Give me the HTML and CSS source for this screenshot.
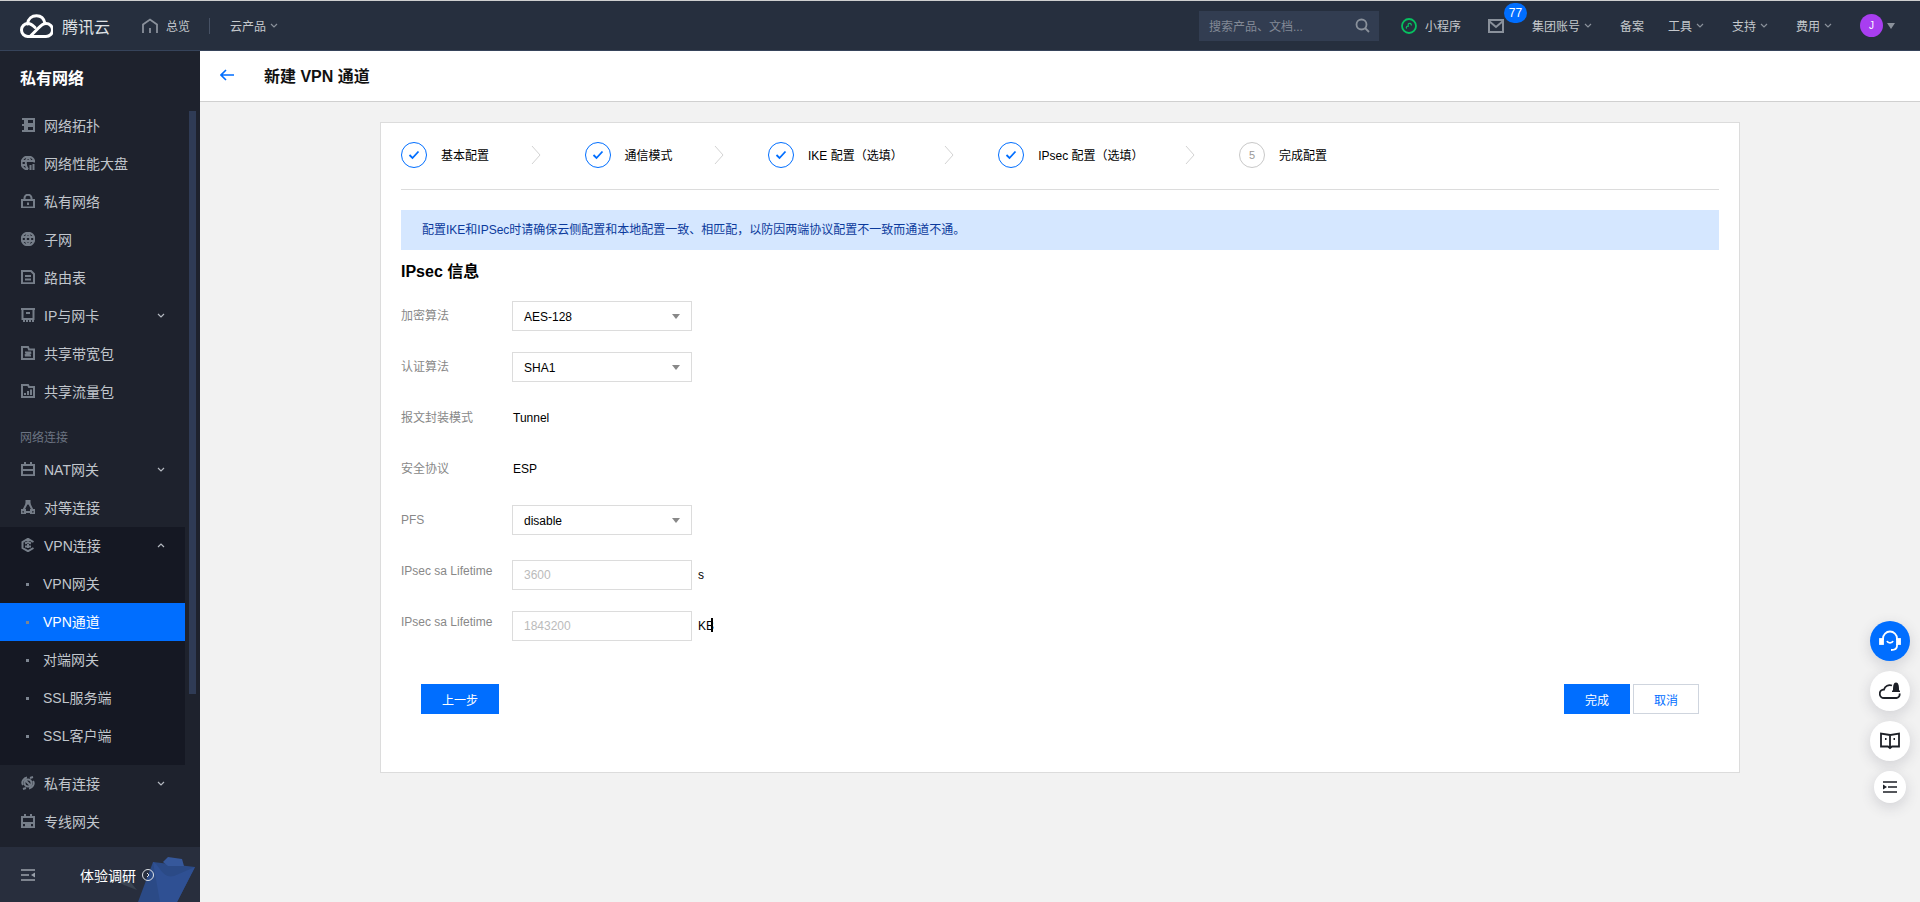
FILE: index.html
```html
<!DOCTYPE html>
<html lang="zh-CN">
<head>
  <meta charset="UTF-8" />
  <title>新建 VPN 通道</title>
  <link rel="stylesheet" href="styles.css">
</head>
<body>
<header class="topbar">
  <svg class="logo" viewBox="0 0 33 24" fill="none" stroke="#fff" stroke-width="3" stroke-linecap="round">
    <path d="M8 22.500H26A6.500 6.500 0 0 0 26 9.500C22 9.500 20 12.500 16.500 16L11 21.500"/>
    <path d="M8 22.500A6.500 6.500 0 1 1 8 9.500C11 9.500 13 11.500 15 13.500"/>
    <path d="M7.500 10C8 4.500 12 1.800 16.500 1.800C20.500 1.800 24 4.500 25 9.500"/>
  </svg>
  <span class="brand">腾讯云</span>
  <svg class="home-icon" viewBox="0 0 16 16" fill="none" stroke="#8a919b" stroke-width="1.800"><path d="M1 15V6.500L8 1.500L15 6.500V15"/><path d="M8 10V15"/></svg>
  <span class="nav-text">总览</span>
  <span class="nav-divider"></span>
  <span class="nav-text nav-products">云产品</span>
  <svg class="chev" viewBox="0 0 8 5" fill="none" stroke="#8a919b" stroke-width="1.200"><path d="M1 1L4 4L7 1"/></svg>

  <div class="search">
    <span>搜索产品、文档...</span>
    <svg width="15" height="15" viewBox="0 0 15 15" fill="none" stroke="#8a919b" stroke-width="1.800"><circle cx="6.500" cy="6.500" r="5"/><path d="M10 10L14 14"/></svg>
  </div>
  <svg class="mini-icon" viewBox="0 0 16 16" fill="none" stroke="#07c160" stroke-width="1.800"><circle cx="8" cy="8" r="7"/><path d="M5.800 10.500C4.500 9.500 6 7.800 7.200 8.200V6.500C7.200 4.800 11 5 10.200 7.500" stroke-width="1.200"/></svg>
  <span class="nav-text mini-text">小程序</span>
  <div class="mail">
    <svg width="16" height="14" viewBox="0 0 16 14" fill="none" stroke="#8a919b" stroke-width="2"><rect x="1" y="1" width="14" height="12"/><path d="M1 2L8 8L15 2"/></svg>
    <span class="badge">77</span>
  </div>
  <div class="nav-item"><span class="nav-text">集团账号</span><svg class="chev" viewBox="0 0 8 5" fill="none" stroke="#8a919b" stroke-width="1.200"><path d="M1 1L4 4L7 1"/></svg></div>
  <div class="nav-item"><span class="nav-text">备案</span></div>
  <div class="nav-item nav-item-tight"><span class="nav-text">工具</span><svg class="chev" viewBox="0 0 8 5" fill="none" stroke="#8a919b" stroke-width="1.200"><path d="M1 1L4 4L7 1"/></svg></div>
  <div class="nav-item"><span class="nav-text">支持</span><svg class="chev" viewBox="0 0 8 5" fill="none" stroke="#8a919b" stroke-width="1.200"><path d="M1 1L4 4L7 1"/></svg></div>
  <div class="nav-item"><span class="nav-text">费用</span><svg class="chev" viewBox="0 0 8 5" fill="none" stroke="#8a919b" stroke-width="1.200"><path d="M1 1L4 4L7 1"/></svg></div>
  <div class="nav-item"><span class="avatar">J</span><span class="avatar-caret"></span></div>
</header>

<div class="layout">
  <aside class="sidebar">
    <div class="scrollbar"></div>
    <h2 class="side-title">私有网络</h2>
    <ul class="menu">
      <li class="menu-item">
        <svg class="icon" viewBox="0 0 14 14"><path d="M1 1H4V13H1M1 7H4"/><rect x="6" y="1" width="7" height="5"/><rect x="6" y="8" width="7" height="5"/></svg>网络拓扑
      </li>
      <li class="menu-item">
        <svg class="icon" viewBox="0 0 14 14"><path d="M7 13.500A6.500 6.500 0 1 1 13.500 6.500M1 5H13M1 9H6M7 1C4 4 4 10 7 13.500M7 1C9 3 9.500 4.500 9.500 6"/><path d="M9.500 9V14M12.500 8V14"/></svg>网络性能大盘
      </li>
      <li class="menu-item">
        <svg class="icon" viewBox="0 0 14 14"><rect x="1" y="6" width="12" height="7.500"/><path d="M3.500 6V4A3.500 3.300 0 0 1 10.500 4V6M7 8.500V11"/></svg>私有网络
      </li>
      <li class="menu-item">
        <svg class="icon" viewBox="0 0 14 14"><circle cx="7" cy="7" r="6.300"/><path d="M1 5H13M1 9H13M7 1C4 4 4 10 7 13M7 1C10 4 10 10 7 13"/></svg>子网
      </li>
      <li class="menu-item">
        <svg class="icon" viewBox="0 0 14 14"><path d="M1 1H10L13 4V13.200H1Z"/><path d="M4 6H10M4 9.500H10"/></svg>路由表
      </li>
      <li class="menu-item">
        <svg class="icon" viewBox="0 0 14 14"><rect x="1.500" y="1" width="11" height="10"/><path d="M0 1H14M5 5H9M3 11V14M6 11V14M9 11V14M12 11V14"/></svg>IP与网卡<svg class="menu-chev" viewBox="0 0 8 5"><path d="M1 1L4 4L7 1"/></svg>
      </li>
      <li class="menu-item">
        <svg class="icon" viewBox="0 0 14 14"><path d="M1 1H7L8 3.500H13V13H1Z"/><path d="M4 6.500H10L4 9.500H10"/></svg>共享带宽包
      </li>
      <li class="menu-item">
        <svg class="icon" viewBox="0 0 14 14"><path d="M1 1H7L8 3H13V13H1Z"/><path d="M4 11V9M7 11V7M10 11V5.500"/></svg>共享流量包
      </li>
      <li class="menu-label">网络连接</li>
      <li class="menu-item">
        <svg class="icon" viewBox="0 0 14 14"><rect x="1" y="3" width="12" height="10.200"/><path d="M1 8H13M4 0V3M10 0V3"/></svg>NAT网关<svg class="menu-chev" viewBox="0 0 8 5"><path d="M1 1L4 4L7 1"/></svg>
      </li>
      <li class="menu-item">
        <svg class="icon" viewBox="0 0 14 14"><path d="M7 1L2 11M7 1L12 11"/><rect x="5.500" y="0.500" width="3" height="3"/><rect x="0.500" y="10" width="3.500" height="3.500"/><rect x="10" y="10" width="3.500" height="3.500"/><path d="M4 12H10"/></svg>对等连接
      </li>
      <li class="menu-open">
        <div class="menu-item">
          <svg class="icon" viewBox="0 0 14 14"><path d="M12.500 4L7 0.800L1.500 4V10L7 13.200L12.500 10M4 5.500L7 4L10 5.500M4 8.500H7L10 8.500M7 6V10"/></svg>VPN连接<svg class="menu-chev" viewBox="0 0 8 5"><path d="M1 4L4 1L7 4"/></svg>
        </div>
        <div class="sub-item">VPN网关</div>
        <div class="sub-item sub-active">VPN通道</div>
        <div class="sub-item">对端网关</div>
        <div class="sub-item">SSL服务端</div>
        <div class="sub-item">SSL客户端</div>
      </li>
      <li class="menu-item">
        <svg class="icon" viewBox="0 0 14 14"><path d="M2 9C0 6 3 2 6 1.500M12 5C14 8 11 12 8 12.500M4 4L10 10M9 2L12 1M5 12L2 13"/><circle cx="7" cy="7" r="3.500"/></svg>私有连接<svg class="menu-chev" viewBox="0 0 8 5"><path d="M1 1L4 4L7 1"/></svg>
      </li>
      <li class="menu-item">
        <svg class="icon" viewBox="0 0 14 14"><rect x="1" y="3" width="12" height="10.200"/><path d="M4 0V3M10 0V3M1 9H13"/><path d="M4 11.500H10" stroke-width="3"/></svg>专线网关
      </li>
    </ul>
    <div class="side-footer">
      <svg class="footer-art" viewBox="0 0 90 47">
        <path d="M0 22L12 17L27 35L14 30Z" fill="#3b4452"/>
        <path d="M28 47L43 7L85 12L67 47Z" fill="#2b4a86"/>
        <path d="M43 7C50 10 52 24 64 21L85 12L67 47H50Z" fill="#2f5093"/>
        <path d="M53 7L58 2L72 4L74 11L58 11Z" fill="#36589b"/>
      </svg>
      <svg class="footer-menu" viewBox="0 0 14 12" fill="none" stroke="#9aa1ab" stroke-width="1.500"><path d="M0 1H14M0 6H8M0 11H14"/><path d="M14 3.500L10 6L14 8.500Z" fill="#9aa1ab" stroke="none"/></svg>
      <span class="footer-text">体验调研</span>
      <svg class="footer-info" viewBox="0 0 12 12" fill="none" stroke="#dfe3e8" stroke-width="1"><circle cx="6" cy="6" r="5.500"/><path d="M5 4L7 6L5 8"/></svg>
    </div>
  </aside>

  <main class="content">
    <div class="page-head">
      <svg class="back" viewBox="0 0 14 12" fill="none" stroke="#006eff" stroke-width="1.600"><path d="M14 6H1M6 1L1 6L6 11"/></svg>
      <h1>新建 VPN 通道</h1>
    </div>

    <section class="card">
      <div class="steps">
        <div class="step">
          <span class="step-circle"><svg width="12" height="10" viewBox="0 0 12 10" fill="none" stroke="#006eff" stroke-width="1.800"><path d="M1.500 5L4.500 8L10.500 1.500"/></svg></span>基本配置
        </div>
        <svg class="step-sep" viewBox="0 0 10 20" fill="none" stroke="#d3d3d3"><path d="M1 1L9 10L1 19"/></svg>
        <div class="step">
          <span class="step-circle"><svg width="12" height="10" viewBox="0 0 12 10" fill="none" stroke="#006eff" stroke-width="1.800"><path d="M1.500 5L4.500 8L10.500 1.500"/></svg></span>通信模式
        </div>
        <svg class="step-sep" viewBox="0 0 10 20" fill="none" stroke="#d3d3d3"><path d="M1 1L9 10L1 19"/></svg>
        <div class="step">
          <span class="step-circle"><svg width="12" height="10" viewBox="0 0 12 10" fill="none" stroke="#006eff" stroke-width="1.800"><path d="M1.500 5L4.500 8L10.500 1.500"/></svg></span>IKE 配置（选填）
        </div>
        <svg class="step-sep" viewBox="0 0 10 20" fill="none" stroke="#d3d3d3"><path d="M1 1L9 10L1 19"/></svg>
        <div class="step">
          <span class="step-circle"><svg width="12" height="10" viewBox="0 0 12 10" fill="none" stroke="#006eff" stroke-width="1.800"><path d="M1.500 5L4.500 8L10.500 1.500"/></svg></span>IPsec 配置（选填）
        </div>
        <svg class="step-sep" viewBox="0 0 10 20" fill="none" stroke="#d3d3d3"><path d="M1 1L9 10L1 19"/></svg>
        <div class="step">
          <span class="step-circle step-todo">5</span>完成配置
        </div>
      </div>

      <div class="alert">配置IKE和IPSec时请确保云侧配置和本地配置一致、相匹配，以防因两端协议配置不一致而通道不通。</div>
      <h3 class="form-title">IPsec 信息</h3>

      <form class="form">
        <div class="row">
          <label class="row-label">加密算法</label>
          <div class="select">AES-128</div>
        </div>
        <div class="row">
          <label class="row-label">认证算法</label>
          <div class="select">SHA1</div>
        </div>
        <div class="row">
          <label class="row-label">报文封装模式</label>
          <span class="row-value">Tunnel</span>
        </div>
        <div class="row">
          <label class="row-label">安全协议</label>
          <span class="row-value">ESP</span>
        </div>
        <div class="row row-spaced">
          <label class="row-label">PFS</label>
          <div class="select">disable</div>
        </div>
        <div class="row">
          <label class="row-label row-label-top">IPsec sa Lifetime</label>
          <input class="input" type="text" placeholder="3600" />
          <span class="unit">s</span>
        </div>
        <div class="row">
          <label class="row-label row-label-top">IPsec sa Lifetime</label>
          <input class="input" type="text" placeholder="1843200" />
          <span class="unit">KB<i class="caret"></i></span>
        </div>
        <div class="actions">
          <button class="btn btn-primary" type="button">上一步</button>
          <div class="actions-right">
            <button class="btn btn-primary btn-small" type="button">完成</button>
            <button class="btn btn-plain btn-small" type="button">取消</button>
          </div>
        </div>
      </form>
    </section>
  </main>
</div>

<div class="float-tools">
  <div class="float-btn float-blue">
    <svg width="22" height="22" viewBox="0 0 22 22" fill="none" stroke="#fff" stroke-width="1.800"><path d="M4 10V8.500A7 7 0 0 1 18 8.500V10"/><path d="M18 14V16C18 19 15 20 12 20"/><path d="M8 11C9 13.500 13 13.500 14 11"/><rect x="1" y="9" width="3" height="5" fill="#fff"/><rect x="18" y="9" width="3" height="5" fill="#fff"/></svg>
  </div>
  <div class="float-btn">
    <svg width="22" height="20" viewBox="0 0 22 20" fill="none" stroke="#1c1f26" stroke-width="1.800"><path d="M13 4.500A6 6 0 0 0 5 8.500A4.200 4.200 0 0 0 5 17H17.500A3.500 3.500 0 0 0 20.500 12.500"/><path d="M14 10C14 6 14 1.500 17 1.500C20 1.500 20 6 20 10Z" fill="#1c1f26" stroke="none"/><rect x="13" y="9.500" width="8" height="1.500" fill="#1c1f26" stroke="none"/></svg>
  </div>
  <div class="float-btn">
    <svg width="22" height="18" viewBox="0 0 22 18" fill="none" stroke="#1c1f26" stroke-width="1.800"><path d="M11 3L2 1.500V14.500H9L11 16L13 14.500H20V1.500L11 3V15"/><path d="M6 7H7.500M14.500 7H16"/></svg>
  </div>
  <div class="float-btn float-small">
    <svg width="14" height="12" viewBox="0 0 14 12" fill="none" stroke="#1c1f26" stroke-width="1.300"><path d="M0 1H14M5 6H14M0 11H14"/><path d="M0 3.500L4 6L0 8.500Z" fill="#1c1f26" stroke="none"/></svg>
  </div>
</div>
</body>
</html>
```

FILE: styles.css
```css
* {
  box-sizing: border-box;
}
html, body {
  height: 100%;
}
body {
  margin: 0;
  overflow: hidden;
  font-family: "Liberation Sans", "Noto Sans CJK SC", sans-serif;
  font-size: 12px;
  color: #000;
  background: #f2f2f2;
}

/* top bar */
.topbar {
  display: flex;
  align-items: center;
  height: 51px;
  padding: 0 25px 0 20px;
  background: #262f3e;
  border-top: 1px solid #cfcfcf;
  border-bottom: 1px solid #36435a;
}
.logo {
  width: 33px;
  height: 24px;
}
.brand {
  margin-left: 9px;
  font-size: 16px;
  color: #dfe1e4;
}
.home-icon {
  width: 16px;
  height: 16px;
  margin-left: 32px;
}
.nav-text {
  color: #c4c8cc;
  white-space: nowrap;
}
.home-icon + .nav-text {
  margin-left: 8px;
}
.nav-divider {
  width: 1px;
  height: 16px;
  margin-left: 19px;
  background: #465164;
}
.nav-products {
  margin-left: 20px;
}
.chev {
  width: 8px;
  height: 5px;
  margin-left: 4px;
}
.search {
  display: flex;
  align-items: center;
  justify-content: space-between;
  width: 180px;
  height: 30px;
  margin-left: auto;
  padding: 0 9px 0 10px;
  background: #323d51;
  color: #828996;
}
.mini-icon {
  width: 16px;
  height: 16px;
  margin-left: 22px;
}
.mini-text {
  margin-left: 8px;
}
.mail {
  position: relative;
  display: flex;
  margin-left: 27px;
}
.badge {
  position: absolute;
  left: 16px;
  top: -16px;
  width: 23px;
  height: 20px;
  border-radius: 10px;
  background: #006eff;
  color: #fff;
  text-align: center;
  line-height: 20px;
}
.nav-item {
  display: flex;
  align-items: center;
  margin-left: 28px;
}
.nav-item-tight {
  margin-left: 24px;
}
.avatar {
  width: 23px;
  height: 23px;
  border-radius: 50%;
  background: #a83ef0;
  color: #fff;
  font-size: 10px;
  text-align: center;
  line-height: 23px;
}
.avatar-caret {
  width: 0;
  height: 0;
  margin-left: 4px;
  border-left: 4px solid transparent;
  border-right: 4px solid transparent;
  border-top: 6px solid #8a919b;
}

/* page layout */
.layout {
  display: flex;
  height: 851px;
}

/* sidebar */
.sidebar {
  position: relative;
  display: flex;
  flex-direction: column;
  width: 200px;
  flex-shrink: 0;
  background: #1e222d;
  overflow: hidden;
}
.scrollbar {
  position: absolute;
  left: 189px;
  top: 60px;
  width: 7px;
  height: 583px;
  background: #2f3b55;
}
.side-title {
  height: 56px;
  margin: 0;
  padding-left: 20px;
  font-size: 16px;
  font-weight: 700;
  line-height: 56px;
  color: #fff;
}
.menu {
  flex: 1;
  width: 185px;
  margin: 0;
  padding: 0;
  list-style: none;
}
.menu-item {
  display: flex;
  align-items: center;
  height: 38px;
  padding: 0 0 2px 21px;
  font-size: 14px;
  color: #c1c6cc;
}
.menu-label {
  height: 40px;
  padding: 19px 0 0 20px;
  line-height: 16px;
  color: #6c7482;
}
.icon {
  width: 14px;
  height: 14px;
  margin-right: 9px;
  fill: none;
  stroke: #767e89;
  stroke-width: 2;
}
.menu-chev {
  width: 8px;
  height: 5px;
  margin-left: auto;
  margin-right: 20px;
  fill: none;
  stroke: #b4b9c0;
  stroke-width: 1.200;
}
.menu-open {
  padding-bottom: 10px;
  background: #151823;
}
.sub-item {
  position: relative;
  height: 38px;
  padding-left: 43px;
  font-size: 14px;
  line-height: 38px;
  color: #c1c6cc;
}
.sub-item::before {
  content: "";
  position: absolute;
  left: 26px;
  top: 18px;
  width: 3px;
  height: 3px;
  background: #7d8591;
}
.sub-active {
  background: #006eff;
  color: #fff;
}
.side-footer {
  position: relative;
  display: flex;
  align-items: center;
  flex-shrink: 0;
  height: 55px;
  padding-left: 21px;
  background: #282e3d;
  overflow: hidden;
}
.footer-art {
  position: absolute;
  left: 110px;
  top: 8px;
  width: 90px;
  height: 47px;
}
.footer-menu {
  position: relative;
  width: 14px;
  height: 12px;
}
.footer-text {
  position: relative;
  margin-left: 45px;
  font-size: 14px;
  color: #fff;
}
.footer-info {
  position: relative;
  width: 12px;
  height: 12px;
  margin-left: 6px;
}

/* content */
.content {
  flex: 1;
  min-width: 0;
}
.page-head {
  display: flex;
  align-items: center;
  height: 51px;
  padding: 0 0 2px 20px;
  background: #fff;
  border-bottom: 1px solid #d0d0d0;
}
.back {
  width: 14px;
  height: 12px;
}
.page-head h1 {
  margin: 0 0 0 30px;
  font-size: 16px;
  font-weight: 700;
  color: #111;
}
.card {
  width: 1360px;
  height: 651px;
  margin: 20px auto 0;
  padding: 0 20px;
  background: #fff;
  border: 1px solid #dcdcdc;
}

/* steps */
.steps {
  display: flex;
  align-items: center;
  height: 67px;
  padding-bottom: 3px;
  border-bottom: 1px solid #dcdcdc;
}
.step {
  display: flex;
  align-items: center;
  white-space: nowrap;
}
.step-circle {
  display: flex;
  align-items: center;
  justify-content: center;
  width: 26px;
  height: 26px;
  margin-right: 14px;
  border: 1px solid #006eff;
  border-radius: 50%;
}
.step-todo {
  border-color: #c8c8c8;
  color: #999;
  font-size: 11px;
}
.step-sep {
  width: 10px;
  height: 20px;
  margin: 0 44px 0 41.500px;
}

.alert {
  height: 40px;
  margin-top: 20px;
  padding-left: 21px;
  background: #d5e7ff;
  color: #0b3a9c;
  line-height: 40px;
}
.form-title {
  margin: 11px 0 18px;
  font-size: 16px;
  font-weight: 700;
  line-height: 22px;
}

/* form rows */
.row {
  display: flex;
  align-items: flex-start;
  height: 30px;
  margin-bottom: 21px;
}
.row-spaced {
  margin-bottom: 25px;
}
.row-label {
  width: 111px;
  flex-shrink: 0;
  line-height: 31px;
  color: #888;
}
.row-label-top {
  line-height: 22px;
}
.row-value {
  line-height: 30px;
  padding-left: 1px;
}
.select {
  position: relative;
  width: 180px;
  height: 30px;
  padding: 1px 0 0 11px;
  border: 1px solid #dcdcdc;
  line-height: 28px;
}
.select::after {
  content: "";
  position: absolute;
  right: 11px;
  top: 12px;
  border-left: 4px solid transparent;
  border-right: 4px solid transparent;
  border-top: 5px solid #888;
}
.input {
  width: 180px;
  height: 30px;
  padding: 0 11px;
  border: 1px solid #dcdcdc;
  font: inherit;
  outline: none;
}
.input::placeholder {
  color: #bbb;
}
.unit {
  margin-left: 6px;
  line-height: 30px;
}
.caret {
  display: inline-block;
  width: 2px;
  height: 14px;
  margin-left: -3px;
  background: #000;
  vertical-align: -2px;
}

/* buttons */
.actions {
  display: flex;
  justify-content: space-between;
  margin-top: 43px;
  padding: 0 20px;
}
.actions-right {
  display: flex;
  gap: 3px;
}
.btn {
  width: 78px;
  height: 30px;
  padding: 0;
  border: 1px solid #006eff;
  font: inherit;
}
.btn-small {
  width: 66px;
}
.btn-primary {
  background: #006eff;
  color: #fff;
}
.btn-plain {
  background: #fff;
  border-color: #cfd5de;
  color: #006eff;
}

/* floating tools on the right */
.float-tools {
  position: fixed;
  right: 10px;
  top: 621px;
  display: flex;
  flex-direction: column;
  align-items: center;
  gap: 10px;
}
.float-btn {
  display: flex;
  align-items: center;
  justify-content: center;
  width: 40px;
  height: 40px;
  border-radius: 50%;
  background: #fff;
  box-shadow: 0 4px 14px rgba(54, 58, 80, 0.18);
}
.float-blue {
  background: #006eff;
}
.float-small {
  width: 32px;
  height: 32px;
}
```
